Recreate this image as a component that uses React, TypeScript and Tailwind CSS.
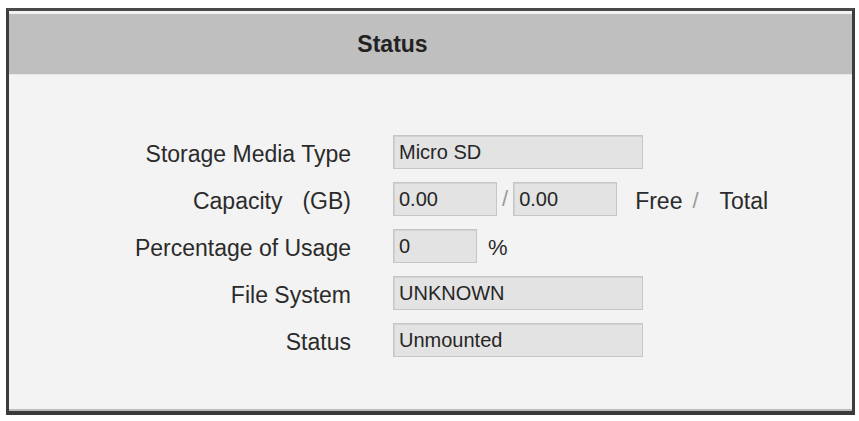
const rows = [
  { label: "Storage Media Type", kind: "wide", value: "Micro SD" },
  { label: "Capacity", kind: "capacity", value: "" },
  { label: "Percentage of Usage", kind: "percent", value: "0" },
  { label: "File System", kind: "wide", value: "UNKNOWN" },
  { label: "Status", kind: "wide", value: "Unmounted" },
];

function Field({ value, className }: { value: string; className: string }) {
  return (
    <div
      className={`flex h-[34px] items-center border border-[#c6c6c6] bg-[#e3e3e3] pl-[5px] text-[20px] text-[#262626] shadow-[inset_1px_1px_0_#d2d2d2] ${className}`}
    >
      {value}
    </div>
  );
}

export default function App() {
  return (
    <div className="h-[421px] w-[859px] bg-white pl-[6px] pt-[8px] font-['Liberation_Sans',Arial,sans-serif] leading-none">
      <div className="flex h-[407px] w-[849px] flex-col border-x-[3px] border-t-[3px] border-b-[4px] border-x-[#3c3c3c] border-t-[#4a4a4a] border-b-[#3a3a3a] bg-[#f3f3f3] shadow-[inset_0_-2px_0_#bdbdbd]">
        <div className="mt-[3px] flex h-[61px] items-center justify-center border-b border-[#e6e6e6] bg-[#bfbfbf] pr-[76px] text-[23px] font-bold text-[#222]">
          Status
        </div>

        <div className="grid grid-cols-[342px_auto] gap-x-[42px] gap-y-[13px] pt-[60px]">
          {rows.map((row) => (
            <div key={row.label} className="contents">
              <div className="flex h-[34px] items-center justify-end pt-[5px] text-[23px] text-[#2b2b2b]">
                {row.kind === "capacity" ? (
                  <>
                    <span>{row.label}</span>
                    <span className="ml-[20px]">(GB)</span>
                  </>
                ) : (
                  row.label
                )}
              </div>

              {row.kind === "wide" && <Field value={row.value} className="w-[250px]" />}

              {row.kind === "capacity" && (
                <div className="flex h-[34px] items-center">
                  <Field value="0.00" className="w-[104px]" />
                  <span className="mx-[5px] text-[22px] text-[#9a9a9a]">/</span>
                  <Field value="0.00" className="w-[104px]" />
                  <span className="ml-[18px] pt-[4px] text-[23px] text-[#2b2b2b]">Free</span>
                  <span className="ml-[10px] pt-[4px] text-[22px] text-[#9a9a9a]">/</span>
                  <span className="ml-[21px] pt-[4px] text-[23px] text-[#2b2b2b]">Total</span>
                </div>
              )}

              {row.kind === "percent" && (
                <div className="flex h-[34px] items-center">
                  <Field value={row.value} className="w-[84px]" />
                  <span className="ml-[11px] pt-[4px] text-[22px] text-[#2b2b2b]">%</span>
                </div>
              )}
            </div>
          ))}
        </div>
      </div>
    </div>
  );
}
